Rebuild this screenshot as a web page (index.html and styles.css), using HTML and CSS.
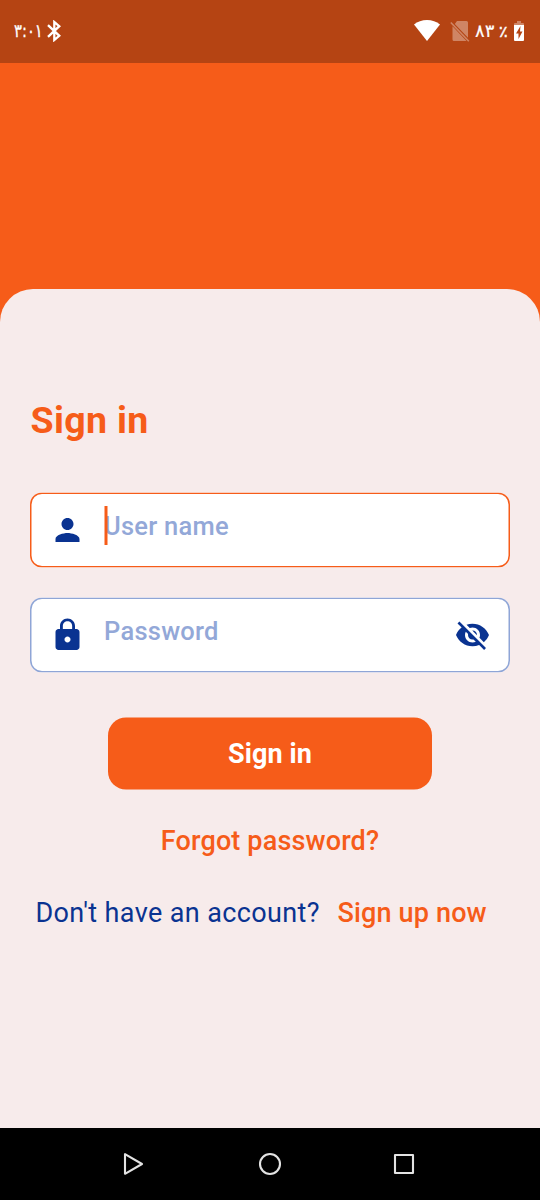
FILE: index.html
```html
<!DOCTYPE html>
<html lang="en">
<head>
<meta charset="utf-8">
<title>Sign in</title>
<link rel="stylesheet" href="styles.css">
</head>
<body>
<div class="screen">
  <header class="status-bar">
    <div class="status-group">
      <bdo class="clock" dir="ltr">۳:۰۱</bdo>
      <svg class="bluetooth" viewBox="0 0 14 22" fill="none" stroke="currentColor" stroke-width="2.300"><path d="M1 5.200 12.300 15.800 7.300 20V2L12.300 6.200 1 16.800"/></svg>
    </div>
    <div class="status-group">
      <svg class="wifi" viewBox="0 0 26 21" fill="currentColor"><path d="M13 21 0 4.500C3.500 1.700 8 0 13 0s9.500 1.700 13 4.500z"/></svg>
      <svg class="no-sim" viewBox="0 0 20 22"><path d="M7 1h9.500a1.500 1.500 0 0 1 1.500 1.500v15.200L4.800 4zM2.500 6.200 16.500 21H4a1.500 1.500 0 0 1-1.500-1.500z" fill="currentColor"/><path d="M.8 2.500 18.800 21.200" stroke="currentColor" stroke-width="1.600"/></svg>
      <span class="percent"><bdo dir="ltr">۸۳ <span class="sign">٪</span></bdo></span>
      <svg class="battery" viewBox="0 0 10 20"><path d="M0 4V3q0-1 1-1h2V0h4v2h2q1 0 1 1v1z" fill="currentColor" opacity=".35"/><path d="M0 4h10v15q0 1-1 1H1q-1 0-1-1z" fill="currentColor"/><path d="M6.500 5 2 12.500h2.500V18L8.500 10.500H6z" fill="#b54413"/></svg>
    </div>
  </header>
  <main class="sheet">
    <h1 class="title">Sign in</h1>
    <div class="field field-active">
      <svg class="icon" viewBox="0 0 24 24"><path d="M12 12c2.210 0 4-1.790 4-4s-1.790-4-4-4-4 1.790-4 4 1.790 4 4 4zm0 2c-2.670 0-8 1.340-8 4v2h16v-2c0-2.660-5.330-4-8-4z"/></svg>
      <span class="placeholder"><i class="caret"></i>User name</span>
    </div>
    <div class="field">
      <svg class="icon" viewBox="0 0 24 24"><path d="M18 8h-1V6c0-2.760-2.240-5-5-5S7 3.240 7 6v2H6c-1.100 0-2 .9-2 2v10c0 1.100.9 2 2 2h12c1.100 0 2-.9 2-2V10c0-1.100-.9-2-2-2zm-6 9c-1.100 0-2-.9-2-2s.9-2 2-2 2 .9 2 2-.9 2-2 2zm3.100-9H8.900V6c0-1.710 1.390-3.100 3.100-3.100s3.100 1.390 3.100 3.100v2z"/></svg>
      <span class="placeholder">Password</span>
      <svg class="icon eye" viewBox="0 0 24 24"><path d="M12 7c2.760 0 5 2.240 5 5 0 .65-.13 1.260-.36 1.830l2.920 2.920c1.510-1.260 2.700-2.890 3.430-4.750-1.730-4.390-6-7.500-11-7.500-1.400 0-2.740.25-3.980.7l2.160 2.160C10.740 7.130 11.350 7 12 7zM2 4.270l2.280 2.280.46.46C3.080 8.300 1.780 10.020 1 12c1.730 4.390 6 7.500 11 7.500 1.550 0 3.030-.3 4.380-.84l.42.42L19.730 22 21 20.730 3.270 3 2 4.270zM7.530 9.800l1.550 1.550c-.05.21-.08.43-.08.65 0 1.660 1.340 3 3 3 .22 0 .44-.03.65-.08l1.550 1.550c-.67.33-1.410.53-2.200.53-2.760 0-5-2.240-5-5 0-.79.2-1.530.53-2.200zm4.310-.78 3.150 3.150.02-.16c0-1.660-1.340-3-3-3l-.17.01z"/></svg>
    </div>
    <button class="submit">Sign in</button>
    <a class="forgot">Forgot password?</a>
    <div class="signup"><span class="question">Don't have an account?</span><a class="signup-link">Sign up now</a></div>
  </main>
  <nav class="nav-bar">
    <svg viewBox="0 0 24 24"><path d="M4 2.200v19.600L21 12z"/></svg>
    <svg viewBox="0 0 24 24"><circle cx="12" cy="12" r="10"/></svg>
    <svg viewBox="0 0 24 24"><path d="M3 3h18v18H3z"/></svg>
  </nav>
</div>
</body>
</html>
```
FILE: styles.css
```css
* { box-sizing: border-box; }
body { margin: 0; font-family: Roboto, sans-serif; }
svg { display: block; flex: none; }
.screen { width: 540px; height: 1200px; display: flex; flex-direction: column; background: #f65c19; overflow: hidden; }
.status-bar { height: 63px; flex: none; display: flex; justify-content: space-between; padding: 0 16px 2px 14px; background: #b54413; color: #fff; }
.status-group { display: flex; align-items: center; white-space: nowrap; font: 18px "DejaVu Sans", sans-serif; }
.clock { width: 33px; transform: scaleX(.82); transform-origin: left; -webkit-text-stroke: .3px #fff; }
.bluetooth { width: 14px; height: 22px; }
.wifi { width: 26px; height: 21px; margin-right: 10px; }
.no-sim { width: 20px; height: 22px; margin-right: 5px; opacity: .35; }
.percent { width: 39px; -webkit-text-stroke: .2px #fff; }
.sign { font-size: 16px; margin-left: -1px; -webkit-text-stroke: .5px #fff; }
.battery { width: 10px; height: 20px; }
.sheet { flex: 1; margin-top: 226px; padding: 109px 30px 0; border-radius: 33px 33px 0 0; background: #f7ebeb; display: flex; flex-direction: column; }
.title { margin: 0 0 50px .5px; font-size: 37.5px; line-height: 44px; font-weight: 700; letter-spacing: .35px; color: #f65c19; }
.field { height: 75px; flex: none; display: flex; align-items: center; padding: 0 19px; margin-bottom: 30px; border-radius: 12px; background: #fff; box-shadow: inset 0 0 0 1.5px #8fa5d6; transform: translateY(.5px); }
.field-active { box-shadow: inset 0 0 0 1.5px #f65c19; }
.icon { width: 36px; height: 36px; margin-top: -1px; fill: #0a3391; transform: translate(.5px, .5px); }
.eye { transform: translate(-.5px, .5px); }
.placeholder { flex: 1; position: relative; margin-left: 19px; padding-bottom: 9px; font-size: 25.5px; line-height: 30px; font-weight: 500; letter-spacing: .25px; color: #93a8d8; }
.caret { position: absolute; left: 0; top: -5px; width: 3px; height: 39px; background: #f65c19; transform: translate(.5px, .5px); }
.submit { width: 324px; height: 72px; margin: 15px auto 0; padding: 0; border: 0; border-radius: 18px; background: #f65c19; color: #fff; font: 700 27px/73px Roboto, sans-serif; letter-spacing: .1px; transform: translateY(.5px); }
.forgot { align-self: center; margin-top: 36px; font-size: 27px; line-height: 32px; font-weight: 500; letter-spacing: .15px; color: #f65c19; }
.signup { display: flex; margin-top: 40px; padding-left: 5.4px; font-size: 27px; line-height: 32px; letter-spacing: .38px; white-space: nowrap; }
.question { width: 302.2px; color: #0a3391; }
.signup-link { font-weight: 500; letter-spacing: .15px; color: #f65c19; }
.nav-bar { height: 72px; flex: none; display: flex; justify-content: space-between; align-items: center; padding: 0 124px 0 121px; background: #000; }
.nav-bar svg { width: 24px; height: 24px; fill: none; stroke: #e3e3e3; stroke-width: 2.1; stroke-linejoin: round; }
.nav-bar svg:nth-child(2) { margin-left: 2px; }
```
